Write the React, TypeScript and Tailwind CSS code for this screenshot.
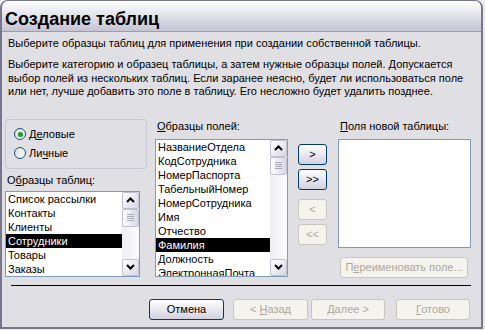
import React from 'react';

type Dir = 'up' | 'down';

function Chevron({ dir }: { dir: Dir }) {
  return (
    <svg width="9" height="6" viewBox="0 0 9 6" className="block">
      <path
        d={dir === 'up' ? 'M1 5 L4.5 1.5 L8 5' : 'M1 1 L4.5 4.5 L8 1'}
        fill="none"
        stroke="#000"
        strokeWidth="2"
      />
    </svg>
  );
}

function ScrollButton({ dir }: { dir: Dir }) {
  return (
    <div className="flex h-[17px] w-[17px] items-center justify-center rounded-[2px] border border-[#c2c1d2] bg-gradient-to-br from-white to-[#d8d7e3]">
      <Chevron dir={dir} />
    </div>
  );
}

function ScrollBar() {
  return (
    <div className="flex w-[17px] shrink-0 flex-col bg-gradient-to-r from-[#eeeef2] to-[#fcfcfd]">
      <ScrollButton dir="up" />
      <div className="flex h-[18px] w-[17px] flex-col items-center justify-center gap-[1px] rounded-[2px] border border-[#c2c1d2] bg-gradient-to-r from-white to-[#d8d7e3]">
        <div className="h-px w-[7px] bg-[#a9a8b8]" />
        <div className="h-px w-[7px] bg-[#a9a8b8]" />
        <div className="h-px w-[7px] bg-[#a9a8b8]" />
        <div className="h-px w-[7px] bg-[#a9a8b8]" />
      </div>
      <div className="flex-1" />
      <ScrollButton dir="down" />
    </div>
  );
}

function ListBox({ items, selected, className }: { items: string[]; selected: string; className: string }) {
  return (
    <div className={`flex overflow-hidden border border-[#7f9db9] bg-white ${className}`}>
      <div className="flex-1 overflow-hidden">
        {items.map((item) => (
          <div
            key={item}
            className={`h-[14px] whitespace-nowrap pl-[2px] leading-[14px] ${item === selected ? 'bg-black text-white' : ''}`}
          >
            {item}
          </div>
        ))}
      </div>
      <ScrollBar />
    </div>
  );
}

function Radio({ checked }: { checked?: boolean }) {
  return (
    <div className="flex h-[12px] w-[12px] items-center justify-center rounded-full border border-[#1c5180] bg-gradient-to-br from-[#dcdcd7] to-white">
      {checked && <div className="h-[5px] w-[5px] rounded-full bg-[#21a121] shadow-[0_0_1px_#6fd36f]" />}
    </div>
  );
}

function Button({ children, disabled, className }: { children: React.ReactNode; disabled?: boolean; className: string }) {
  return (
    <div
      className={`flex items-center justify-center whitespace-nowrap rounded-[3px] border ${
        disabled
          ? 'border-[#c9c7ba] bg-[#f4f3ee] text-[#aca899]'
          : 'border-[#003c74] bg-gradient-to-b from-white to-[#d3d2df] text-black'
      } ${className}`}
    >
      {children}
    </div>
  );
}

export default function App() {
  const tables = ['Список рассылки', 'Контакты', 'Клиенты', 'Сотрудники', 'Товары', 'Заказы'];
  const fields = [
    'НазваниеОтдела',
    'КодСотрудника',
    'НомерПаспорта',
    'ТабельныйНомер',
    'НомерСотрудника',
    'Имя',
    'Отчество',
    'Фамилия',
    'Должность',
    'ЭлектроннаяПочта',
  ];

  return (
    <div className="h-[330px] w-[485px] bg-[#e9e9ee] font-['Liberation_Sans',Arial,sans-serif] text-[11px] leading-[13px] text-black">
      <div className="flex h-[329px] w-[483px] flex-col overflow-hidden rounded-t-[8px] border-x-2 border-t border-b-2 border-[#76768e] bg-[#e0dfe3]">
        {/* Header */}
        <div className="h-[31px] shrink-0 border-b border-[#9c9cac] bg-gradient-to-b from-white to-[#c4c4d4] pl-[3px] pt-[7px] text-[18px] font-bold leading-[22px]">
          Создание таблиц
        </div>

        <div className="flex flex-1 flex-col">
          <p className="ml-[6px] mt-[5px] whitespace-nowrap">
            Выберите образцы таблиц для применения при создании собственной таблицы.
          </p>
          <p className="ml-[6px] mt-[8px] whitespace-nowrap leading-[13.5px]">
            Выберите категорию и образец таблицы, а затем нужные образцы полей. Допускается
            <br />
            выбор полей из нескольких таблиц. Если заранее неясно, будет ли использоваться поле
            <br />
            или нет, лучше добавить это поле в таблицу. Его несложно будет удалить позднее.
          </p>

          {/* Main row */}
          <div className="ml-[3px] mt-[20px] flex items-start">
            <div className="flex w-[142px] flex-col">
              <div className="flex h-[50px] flex-col gap-[6px] rounded-[4px] border border-[#c9c8d0] pl-[8px] pt-[8px]">
                <div className="flex h-[13px] items-center gap-[3px]">
                  <Radio checked />
                  <span>
                    Д<span className="underline">е</span>ловые
                  </span>
                </div>
                <div className="flex h-[13px] items-center gap-[3px]">
                  <Radio />
                  <span>
                    Ли<span className="underline">ч</span>ные
                  </span>
                </div>
              </div>
              <div className="ml-[2px] mt-[5px]">
                О<span className="underline">б</span>разцы таблиц:
              </div>
              <ListBox items={tables} selected="Сотрудники" className="mt-[4px] h-[86px] w-[135px]" />
            </div>

            <div className="ml-[8px] flex w-[133px] flex-col">
              <div className="ml-[2px] mt-[1px]">
                <span className="underline">О</span>бразцы полей:
              </div>
              <ListBox items={fields} selected="Фамилия" className="mt-[6px] h-[138px] w-[133px]" />
            </div>

            <div className="ml-[10px] mt-[25px] flex w-[29px] flex-col">
              <Button className="h-[21px]">&gt;</Button>
              <Button className="mt-[4px] h-[21px]">&gt;&gt;</Button>
              <Button disabled className="mt-[9px] h-[21px]">&lt;</Button>
              <Button disabled className="mt-[4px] h-[21px]">&lt;&lt;</Button>
            </div>

            <div className="ml-[11px] flex w-[133px] flex-col">
              <div className="ml-[2px] mt-[1px]">
                <span className="underline">П</span>оля новой таблицы:
              </div>
              <div className="mt-[6px] h-[109px] w-[133px] border border-[#7f9db9] bg-white" />
              <Button disabled className="ml-[2px] mt-[9px] h-[21px] w-[128px]">
                <span>
                  П<span className="underline">е</span>реименовать поле...
                </span>
              </Button>
            </div>
          </div>

          <div className="ml-[9px] mt-[7px] h-px w-[460px] bg-black" />

          {/* Footer buttons */}
          <div className="ml-[147px] mt-[13px] flex">
            <Button className="h-[21px] w-[75px]">Отмена</Button>
            <Button disabled className="ml-[9px] h-[21px] w-[75px]">
              <span>
                &lt; <span className="underline">Н</span>азад
              </span>
            </Button>
            <Button disabled className="ml-[3px] h-[21px] w-[74px]">
              <span>
                <span className="underline">Д</span>алее &gt;
              </span>
            </Button>
            <Button disabled className="ml-[11px] h-[21px] w-[74px]">
              <span>
                <span className="underline">Г</span>отово
              </span>
            </Button>
          </div>
        </div>
      </div>
    </div>
  );
}
